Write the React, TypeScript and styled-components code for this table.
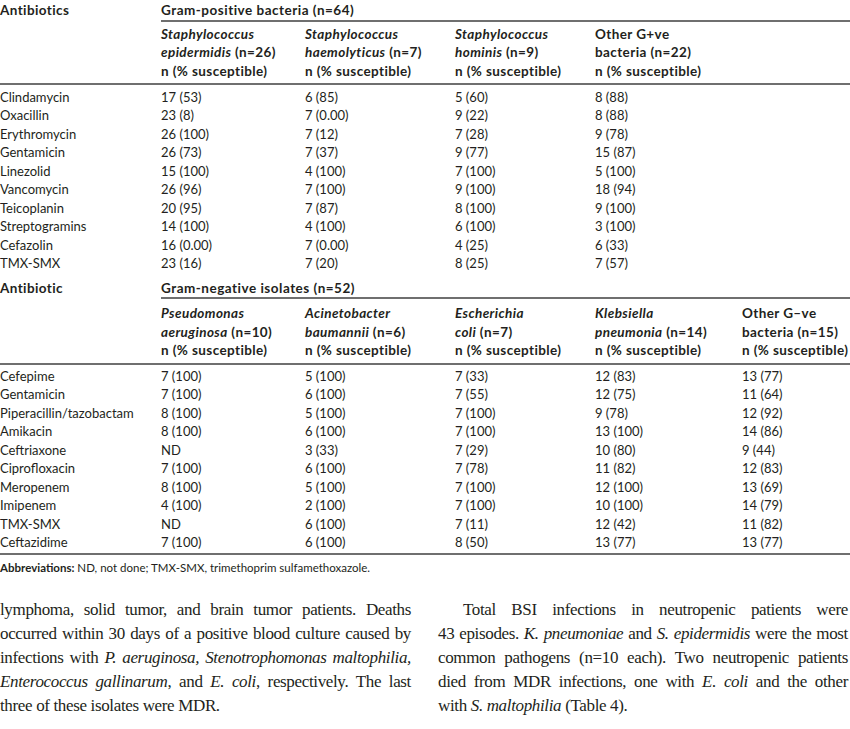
import React from "react";
import styled, { createGlobalStyle } from "styled-components";

const Global = createGlobalStyle`
  html, body { margin: 0; padding: 0; background: #ffffff; }
  body { color: #231f20; }
`;

const Page = styled.div`
  width: 850px;
  display: flex;
  flex-direction: column;
`;

const Table = styled.div`
  font-family: Lato, "Open Sans", sans-serif;
  font-size: 13px;
  line-height: 18.5px;
  color: #231f20;
  display: flex;
  flex-direction: column;
`;

const cols = "161px 144px 150px 140px 147px 1fr";

const Row = styled.div<{ $pt?: number; $pb?: number; $rule?: boolean }>`
  display: grid;
  grid-template-columns: ${cols};
  padding-top: ${(p) => p.$pt ?? 0}px;
  padding-bottom: ${(p) => p.$pb ?? 0}px;
  border-bottom: ${(p) => (p.$rule ? "2px solid #6f6f6f" : "none")};
`;

const HeadLabel = styled.div`
  font-weight: 700;
  font-size: 13.5px;
  letter-spacing: 0.4px;
`;

const GroupTitle = styled.div`
  grid-column: 2 / -1;
  font-weight: 700;
  font-size: 13.5px;
  letter-spacing: 0.5px;
  border-bottom: 2px solid #6f6f6f;
`;

const SubHead = styled.div`
  font-weight: 700;
  font-size: 13.5px;
  letter-spacing: 0.4px;
  white-space: nowrap;
  em { font-style: italic; }
`;

const Cell = styled.div`
  white-space: nowrap;
`;

const Note = styled.div`
  font-family: Lato, "Open Sans", sans-serif;
  font-size: 11.5px;
  line-height: 14px;
  padding-top: 6px;
  b { font-weight: 700; }
`;

const Columns = styled.div`
  display: grid;
  grid-template-columns: 411px 410px;
  column-gap: 27px;
  padding-top: 23px;
  font-family: "Liberation Serif", "Times New Roman", serif;
  font-size: 17px;
  line-height: 24px;
  letter-spacing: -0.35px;
`;

const Para = styled.div``;

const Line = styled.div<{ $last?: boolean; $indent?: boolean }>`
  white-space: normal;
  text-align: ${(p) => (p.$last ? "left" : "justify")};
  text-align-last: ${(p) => (p.$last ? "left" : "justify")};
  padding-left: ${(p) => (p.$indent ? "25px" : "0")};
`;

const posHeads: React.ReactNode[] = [
  <>
    <em>Staphylococcus</em>
    <br />
    <em>epidermidis</em> (n=26)
    <br />n (% susceptible)
  </>,
  <>
    <em>Staphylococcus</em>
    <br />
    <em>haemolyticus</em> (n=7)
    <br />n (% susceptible)
  </>,
  <>
    <em>Staphylococcus</em>
    <br />
    <em>hominis</em> (n=9)
    <br />n (% susceptible)
  </>,
  <>
    Other G+ve
    <br />
    bacteria (n=22)
    <br />n (% susceptible)
  </>,
];

const negHeads: React.ReactNode[] = [
  <>
    <em>Pseudomonas</em>
    <br />
    <em>aeruginosa</em> (n=10)
    <br />n (% susceptible)
  </>,
  <>
    <em>Acinetobacter</em>
    <br />
    <em>baumannii</em> (n=6)
    <br />n (% susceptible)
  </>,
  <>
    <em>Escherichia</em>
    <br />
    <em>coli</em> (n=7)
    <br />n (% susceptible)
  </>,
  <>
    <em>Klebsiella</em>
    <br />
    <em>pneumonia</em> (n=14)
    <br />n (% susceptible)
  </>,
  <>
    Other G–ve
    <br />
    bacteria (n=15)
    <br />n (% susceptible)
  </>,
];

const posRows: string[][] = [
  ["Clindamycin", "17 (53)", "6 (85)", "5 (60)", "8 (88)"],
  ["Oxacillin", "23 (8)", "7 (0.00)", "9 (22)", "8 (88)"],
  ["Erythromycin", "26 (100)", "7 (12)", "7 (28)", "9 (78)"],
  ["Gentamicin", "26 (73)", "7 (37)", "9 (77)", "15 (87)"],
  ["Linezolid", "15 (100)", "4 (100)", "7 (100)", "5 (100)"],
  ["Vancomycin", "26 (96)", "7 (100)", "9 (100)", "18 (94)"],
  ["Teicoplanin", "20 (95)", "7 (87)", "8 (100)", "9 (100)"],
  ["Streptogramins", "14 (100)", "4 (100)", "6 (100)", "3 (100)"],
  ["Cefazolin", "16 (0.00)", "7 (0.00)", "4 (25)", "6 (33)"],
  ["TMX-SMX", "23 (16)", "7 (20)", "8 (25)", "7 (57)"],
];

const negRows: string[][] = [
  ["Cefepime", "7 (100)", "5 (100)", "7 (33)", "12 (83)", "13 (77)"],
  ["Gentamicin", "7 (100)", "6 (100)", "7 (55)", "12 (75)", "11 (64)"],
  ["Piperacillin/tazobactam", "8 (100)", "5 (100)", "7 (100)", "9 (78)", "12 (92)"],
  ["Amikacin", "8 (100)", "6 (100)", "7 (100)", "13 (100)", "14 (86)"],
  ["Ceftriaxone", "ND", "3 (33)", "7 (29)", "10 (80)", "9 (44)"],
  ["Ciprofloxacin", "7 (100)", "6 (100)", "7 (78)", "11 (82)", "12 (83)"],
  ["Meropenem", "8 (100)", "5 (100)", "7 (100)", "12 (100)", "13 (69)"],
  ["Imipenem", "4 (100)", "2 (100)", "7 (100)", "10 (100)", "14 (79)"],
  ["TMX-SMX", "ND", "6 (100)", "7 (11)", "12 (42)", "11 (82)"],
  ["Ceftazidime", "7 (100)", "6 (100)", "8 (50)", "13 (77)", "13 (77)"],
];

export default function App() {
  return (
    <Page>
      <Global />
      <Table>
        <Row $pt={1}>
          <HeadLabel>Antibiotics</HeadLabel>
          <GroupTitle>Gram-positive bacteria (n=64)</GroupTitle>
        </Row>
        <Row $pt={3} $pb={3} $rule>
          <div />
          {posHeads.map((h, i) => (
            <SubHead key={i}>{h}</SubHead>
          ))}
        </Row>
        {posRows.map((r, i) => (
          <Row key={i} $pt={i === 0 ? 2.5 : 0}>
            {r.map((c, j) => (
              <Cell key={j}>{c}</Cell>
            ))}
          </Row>
        ))}
        <Row $pt={6}>
          <HeadLabel>Antibiotic</HeadLabel>
          <GroupTitle>Gram-negative isolates (n=52)</GroupTitle>
        </Row>
        <Row $pt={5} $pb={3} $rule>
          <div />
          {negHeads.map((h, i) => (
            <SubHead key={i}>{h}</SubHead>
          ))}
        </Row>
        {negRows.map((r, i) => (
          <Row
            key={i}
            $pt={i === 0 ? 2 : 0}
            $pb={i === negRows.length - 1 ? 1 : 0}
            $rule={i === negRows.length - 1}
          >
            {r.map((c, j) => (
              <Cell key={j}>{c}</Cell>
            ))}
          </Row>
        ))}
      </Table>
      <Note>
        <b>Abbreviations:</b> ND, not done; TMX-SMX, trimethoprim sulfamethoxazole.
      </Note>
      <Columns>
        <Para>
          <Line>lymphoma, solid tumor, and brain tumor patients. Deaths</Line>
          <Line>occurred within 30 days of a positive blood culture caused by</Line>
          <Line>
            infections with <i>P. aeruginosa, Stenotrophomonas maltophilia,</i>
          </Line>
          <Line>
            <i>Enterococcus gallinarum</i>, and <i>E. coli</i>, respectively. The last
          </Line>
          <Line $last>three of these isolates were MDR.</Line>
        </Para>
        <Para>
          <Line $indent>Total BSI infections in neutropenic patients were</Line>
          <Line>
            43 episodes. <i>K. pneumoniae</i> and <i>S. epidermidis</i> were the most
          </Line>
          <Line>common pathogens (n=10 each). Two neutropenic patients</Line>
          <Line>
            died from MDR infections, one with <i>E. coli</i> and the other
          </Line>
          <Line $last>
            with <i>S. maltophilia</i> (Table 4).
          </Line>
        </Para>
      </Columns>
    </Page>
  );
}
